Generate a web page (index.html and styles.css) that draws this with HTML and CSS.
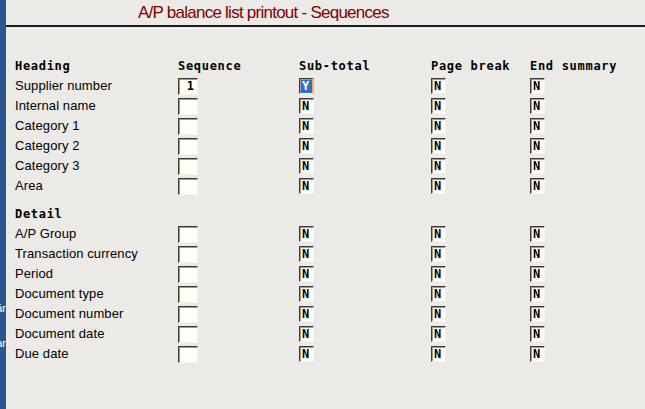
FILE: index.html
```html
<!DOCTYPE html>
<html>
	<head>
		<link rel="stylesheet" href="styles.css">
	</head>
	<body>
		<div class="app">
			<div class="rail">
				<div class="rail-item first"><span>Formulär</span></div>
				<div class="rail-item"><span>Inställningar</span></div>
			</div>
			<div class="main">
				<div class="title">A/P balance list printout - Sequences</div>
				<div class="form">
					<div class="row head">
						<div>Heading</div>
						<div>Sequence</div>
						<div>Sub-total</div>
						<div>Page break</div>
						<div>End summary</div>
					</div>
					<div class="row">
						<div class="label">Supplier number</div>
						<div><span class="seq">1</span></div>
						<div><span class="yn sel">Y</span></div>
						<div><span class="yn">N</span></div>
						<div><span class="yn">N</span></div>
					</div>
					<div class="row">
						<div class="label">Internal name</div>
						<div><span class="seq"></span></div>
						<div><span class="yn">N</span></div>
						<div><span class="yn">N</span></div>
						<div><span class="yn">N</span></div>
					</div>
					<div class="row">
						<div class="label">Category 1</div>
						<div><span class="seq"></span></div>
						<div><span class="yn">N</span></div>
						<div><span class="yn">N</span></div>
						<div><span class="yn">N</span></div>
					</div>
					<div class="row">
						<div class="label">Category 2</div>
						<div><span class="seq"></span></div>
						<div><span class="yn">N</span></div>
						<div><span class="yn">N</span></div>
						<div><span class="yn">N</span></div>
					</div>
					<div class="row">
						<div class="label">Category 3</div>
						<div><span class="seq"></span></div>
						<div><span class="yn">N</span></div>
						<div><span class="yn">N</span></div>
						<div><span class="yn">N</span></div>
					</div>
					<div class="row">
						<div class="label">Area</div>
						<div><span class="seq"></span></div>
						<div><span class="yn">N</span></div>
						<div><span class="yn">N</span></div>
						<div><span class="yn">N</span></div>
					</div>

					<div class="row head detail">
						<div>Detail</div>
					</div>
					<div class="row">
						<div class="label">A/P Group</div>
						<div><span class="seq"></span></div>
						<div><span class="yn">N</span></div>
						<div><span class="yn">N</span></div>
						<div><span class="yn">N</span></div>
					</div>
					<div class="row">
						<div class="label">Transaction currency</div>
						<div><span class="seq"></span></div>
						<div><span class="yn">N</span></div>
						<div><span class="yn">N</span></div>
						<div><span class="yn">N</span></div>
					</div>
					<div class="row">
						<div class="label">Period</div>
						<div><span class="seq"></span></div>
						<div><span class="yn">N</span></div>
						<div><span class="yn">N</span></div>
						<div><span class="yn">N</span></div>
					</div>
					<div class="row">
						<div class="label">Document type</div>
						<div><span class="seq"></span></div>
						<div><span class="yn">N</span></div>
						<div><span class="yn">N</span></div>
						<div><span class="yn">N</span></div>
					</div>
					<div class="row">
						<div class="label">Document number</div>
						<div><span class="seq"></span></div>
						<div><span class="yn">N</span></div>
						<div><span class="yn">N</span></div>
						<div><span class="yn">N</span></div>
					</div>
					<div class="row">
						<div class="label">Document date</div>
						<div><span class="seq"></span></div>
						<div><span class="yn">N</span></div>
						<div><span class="yn">N</span></div>
						<div><span class="yn">N</span></div>
					</div>
					<div class="row">
						<div class="label">Due date</div>
						<div><span class="seq"></span></div>
						<div><span class="yn">N</span></div>
						<div><span class="yn">N</span></div>
						<div><span class="yn">N</span></div>
					</div>
				</div>
			</div>
		</div>
	</body>
</html>
```

FILE: styles.css
```css
*{
	margin: 0;
	padding: 0;
	box-sizing: border-box;
}
body{
	background-color: #ebeae7;
	font-family: "Liberation Sans", Arial, sans-serif;
	overflow: hidden;
}
.app{
	display: flex;
	height: 409px;
}
.rail{
	width: 6px;
	flex: none;
	background-color: #2b578a;
	overflow: hidden;
	display: flex;
	flex-direction: column;
}
.rail-item{
	display: flex;
	justify-content: flex-end;
	height: 12px;
	margin-top: 23px;
	color: #fff;
	font-size: 11px;
	line-height: 12px;
	white-space: nowrap;
}
.rail-item.first{
	margin-top: 302px;
}
.main{
	flex: 1;
}
.title{
	height: 27px;
	padding-left: 132px;
	color: #800000;
	font-size: 17px;
	line-height: 26px;
	letter-spacing: -0.75px;
	border-bottom: 2px solid #1e1e1e;
	box-shadow: 0 1px 0 0 #ebeae7, 0 2px 0 0 #fbfbfa;
}
.form{
	padding: 29px 0 0 9px;
}
.row{
	display: grid;
	grid-template-columns: 163px 121px 132px 99px 1fr;
	align-items: center;
	height: 20px;
	font-size: 13px;
	color: #000;
}
.row.head{
	font-family: "DejaVu Sans Mono", "Liberation Mono", monospace;
	font-weight: bold;
	font-size: 12px;
	letter-spacing: 0.7px;
}
.row.detail{
	margin-top: 8px;
}
.label{
	font-size: 13px;
	line-height: 18px;
	letter-spacing: 0.1px;
}
.seq, .yn{
	display: block;
	background-color: #fffff6;
	border-top: 1px solid #3a3a3a;
	border-left: 1px solid #3a3a3a;
	border-right: 1px solid #f4f2ea;
	border-bottom: 1px solid #f4f2ea;
	box-shadow: inset 1px 1px 0 #9a9a96;
	font-family: "DejaVu Sans Mono", "Liberation Mono", monospace;
	font-weight: bold;
	color: #000;
}
.seq{
	width: 20px;
	height: 17px;
	font-size: 12px;
	line-height: 15px;
	text-align: right;
	padding-right: 3px;
}
.yn{
	width: 15px;
	height: 16px;
	font-size: 12px;
	line-height: 14px;
	padding-left: 2px;
}
.yn.sel{
	color: #fff;
	background-color: #2f6fd0;
	border-right: 2px solid #f0b650;
}
```
